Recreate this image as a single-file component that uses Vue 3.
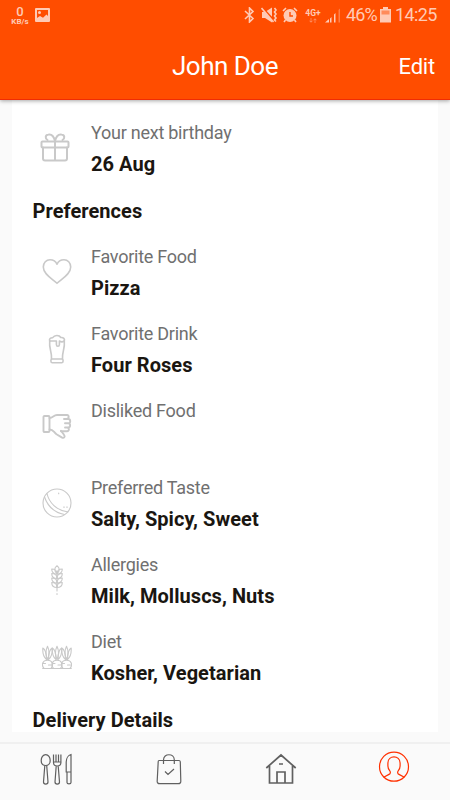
<template>
  <div class="screen">
    <header class="header">
      <div class="status-bar">
        <div class="net-speed">
          <span class="net-value">0</span>
          <span class="net-unit">KB/s</span>
        </div>
        <svg class="picture" width="15" height="14" viewBox="0 0 15 14">
          <path
            fill="currentColor"
            fill-rule="evenodd"
            d="M1 0h13a1 1 0 0 1 1 1v12a1 1 0 0 1-1 1H1a1 1 0 0 1-1-1V1a1 1 0 0 1 1-1zM2 2v8l3-2 3 1.700 3.500-3.200L13 8V2zM4.500 3a1.500 1.500 0 1 1 0 3 1.500 1.500 0 0 1 0-3z"
          />
        </svg>
        <div class="status-right">
          <svg class="bluetooth" width="11" height="16" viewBox="0 0 11 16">
            <path class="line" d="M1 4l8 7.500L5.500 15V1L9 4.500 1 12" />
          </svg>
          <svg class="mute" width="17" height="16" viewBox="0 0 17 16">
            <path fill="currentColor" d="M1 5h3l7-4.500v15L4 11H1z" />
            <path class="slash" d="M1.500 1l12 13" />
            <path class="line" d="M.5 1l12 14M13.500 1l1.500 2-1.500 2 1.500 2-1.500 2 1.500 2-1.500 2 1.500 1.500" />
          </svg>
          <svg class="alarm" width="16" height="16" viewBox="0 0 16 16">
            <circle cx="8" cy="8.500" r="6.500" fill="currentColor" />
            <path class="line" d="M1 4l3-3M15 4l-3-3M3.500 13L2 15M12.500 13l1.500 2" />
            <path class="hands" d="M8 5v4h3" />
          </svg>
          <div class="mobile">
            <span class="mobile-type">4G+</span>
            <svg width="8" height="5" viewBox="0 0 8 5">
              <path class="arrows" d="M2 0v4M.5 2.700L2 4.300l1.500-1.600M6 5V1M4.500 2.300L6 .7l1.500 1.600" />
            </svg>
          </div>
          <svg class="signal" width="16" height="15" viewBox="0 0 16 15">
            <path fill="currentColor" d="M0 14.500L4 11v3.500zM5 10.500L6.500 9v5.500H5zM9 6.500L10.500 5v9.500H9z" />
            <path fill="currentColor" opacity="0.4" d="M13.500 2L15 .5v14h-1.500z" />
          </svg>
          <span class="percent">46%</span>
          <svg class="battery" width="11" height="16" viewBox="0 0 11 16">
            <path fill="currentColor" opacity="0.5" d="M3 0h5v2h2.500v6H.5V2H3z" />
            <path fill="currentColor" d="M3 0h5v2h3v13.500H0V2h3zM1.500 3.500v4h8v-4z" fill-rule="evenodd" />
          </svg>
          <span class="clock">14:25</span>
        </div>
      </div>
      <div class="title-bar">
        <h1 class="title">John Doe</h1>
        <button type="button" class="edit">Edit</button>
      </div>
    </header>

    <main class="content">
      <section v-for="section in sections" :key="section.name" class="section">
        <h2 v-if="section.title" class="section-title">{{ section.title }}</h2>
        <div v-for="row in section.rows" :key="row.label" class="row">
          <svg class="row-icon" :class="row.icon" width="30" height="30" viewBox="0 0 30 30">
            <path v-for="(d, i) in icons[row.icon]" :key="i" :d="d" />
          </svg>
          <div class="row-text">
            <div class="label">{{ row.label }}</div>
            <div class="value">{{ row.value }}</div>
          </div>
        </div>
      </section>
    </main>

    <nav class="tab-bar">
      <button
        v-for="tab in tabs"
        :key="tab.name"
        type="button"
        class="tab"
        :class="[tab.name, { active: activeTab === tab.name }]"
        :aria-label="tab.name"
        @click="activeTab = tab.name"
      >
        <svg width="32" height="32" viewBox="0 0 32 32">
          <path v-for="(d, i) in tab.paths" :key="i" :d="d" />
        </svg>
      </button>
    </nav>
  </div>
</template>

<script setup>
import { ref } from 'vue'

const activeTab = ref('profile')

const sections = [
  {
    name: 'general',
    title: '',
    rows: [{ icon: 'gift', label: 'Your next birthday', value: '26 Aug' }]
  },
  {
    name: 'preferences',
    title: 'Preferences',
    rows: [
      { icon: 'heart', label: 'Favorite Food', value: 'Pizza' },
      { icon: 'beer', label: 'Favorite Drink', value: 'Four Roses' },
      { icon: 'dislike', label: 'Disliked Food', value: '' },
      { icon: 'taste', label: 'Preferred Taste', value: 'Salty, Spicy, Sweet' },
      { icon: 'wheat', label: 'Allergies', value: 'Milk, Molluscs, Nuts' },
      { icon: 'carrots', label: 'Diet', value: 'Kosher, Vegetarian' }
    ]
  },
  {
    name: 'delivery',
    title: 'Delivery Details',
    rows: []
  }
]

const grain = [4, 8.5, 13, 17.5].flatMap((y) => [
  `M15 ${y + 5}c-4 0-5.300-1.800-5.300-5 3.500 0 5.300 1.500 5.300 5z`,
  `M15 ${y + 5}c4 0 5.300-1.800 5.300-5-3.500 0-5.300 1.500-5.300 5z`
])

const carrot = (x) => [
  `M${x - 3.5} 26.300c-3-3.300-1.500-8 3.500-8s6.500 4.700 3.500 8`,
  `M${x} 17.500c-2.200-5-2-9 0-13.200 2 4.200 2.200 8.200 0 13.200z`,
  `M${x - 1} 17.500c-3.200-2.500-4-6-3.700-11.500 2.600 1.500 3.700 5.500 3.700 11.500z`,
  `M${x + 1} 17.500c3.200-2.500 4-6 3.700-11.500-2.600 1.500-3.700 5.500-3.700 11.500z`,
  `M${x - 4.5} 21.500h2.500M${x + 1} 23h3`
]

const icons = {
  gift: [
    'M2.500 9.500h25a1 1 0 0 1 1 1v4a1 1 0 0 1-1 1h-25a1 1 0 0 1-1-1v-4a1 1 0 0 1 1-1z',
    'M3 15.500v11a2 2 0 0 0 2 2h20a2 2 0 0 0 2-2v-11M15 9.500v19',
    'M15 9c-1-4-3.500-7-6.500-6.500C5 3 5 6.500 7.500 8M15 9c1-4 3.500-7 6.500-6.500C25 3 25 6.500 22.500 8'
  ],
  heart: [
    'M15 26.300C11 22.200 1.300 17.500 1.300 10c0-4.300 3-7.300 6.700-7.300 3.200 0 5.800 1.600 7 4.500 1.200-2.900 3.800-4.500 7-4.500 3.700 0 6.700 3 6.700 7.300 0 7.500-9.700 12.200-13.700 16.300z'
  ],
  beer: [
    'M7.700 7c-.8-2 .8-3.500 3-3.300C12.500.8 17.300.8 18.800 3.500c2.700-.3 4.200 1.500 3.500 3.500',
    'M7.700 7h6.700v3.500c0 2.300 3 2.300 3 0V7c2 1.300 3.500 1 4.900 0',
    'M7.700 7c-.9 8 2.500 11 1.800 18M22.300 7c.9 8-2.500 11-1.800 18',
    'M10 25h10c1.500 0 1.500 3.700 0 3.700H10c-1.500 0-1.500-3.700 0-3.700z'
  ],
  dislike: [
    'M2.500 5h4a1 1 0 0 1 1 1v14a1 1 0 0 1-1 1h-4a1 1 0 0 1-1-1V6a1 1 0 0 1 1-1z',
    'M7.500 7c3.500 0 4-3 7.500-3h10c2.300 0 2.300 4-.5 4h-2.500M24.500 8H26c3 0 3 4.300 0 4.300h-3M26 12.300c3 0 2.700 4.200 0 4.200h-3M25 16.500c2.500 0 2.500 3.700 0 3.700h-6',
    'M7.500 18.500c4 0 4 2.500 7 4.700l5.200 3.200c2.400 1.300 3.800-.8 2.300-2.600l-3-4.100'
  ],
  taste: [
    'M15 1a14 14 0 1 0 0 28 14 14 0 1 0 0-28z',
    'M5 5.500c2 9 9.500 17 21 18.500M2.500 9c3 8.500 9 15.500 20 17.500M16.700 5v.7M22 18.700v.7M25 18.700v.7'
  ],
  wheat: [
    'M15 .8c-3 2.200-3 5 0 7.700 3-2.700 3-5.500 0-7.700z',
    ...grain,
    'M15 8v18M15 28.500v1'
  ],
  carrots: [...carrot(5.5), ...carrot(15), ...carrot(24.5), 'M.7 26.500h28.600']
}

const tabs = [
  {
    name: 'food',
    paths: [
      'M5.700 1.700C3 1.700 1.200 4.500 1.200 7.500s1.800 5 4.500 5 4.500-2 4.500-5-1.800-5.800-4.500-5.800z',
      'M4.800 12.500L3.500 29c0 2.800 4.500 2.800 4.500 0L6.700 12.500',
      'M13.500 1.500v8c0 2.500 1.800 3.500 3.700 3.500s3.700-1 3.700-3.500v-8M16 1.500v7M18.500 1.500v7M13.500 9h7.400M16.200 13L15 29c0 2.800 4.500 2.800 4.500 0l-1.300-16',
      'M31 1.500v28c0 1.700-4 1.700-4 0V19h-.8V9c0-3.500 2-6.800 4.800-7.500zM26.500 19H31'
    ]
  },
  {
    name: 'orders',
    paths: [
      'M6 7.500h20c1 0 1.200.5 1.300 1.300L27.800 28c.1 1.800-.8 2.700-2.500 2.700H6.700C5 30.700 4 29.800 4.200 28L5.200 8.800c0-.8.2-1.300.8-1.300z',
      'M10.500 11V7c0-7 10.800-7 10.800 0v4M12 18.500l3 3 6-5.500'
    ]
  },
  {
    name: 'home',
    paths: ['M1.300 15L16 2l14.700 13M4.500 13v17h23V13M12 30V19h8v11M14 11h4']
  },
  {
    name: 'profile',
    paths: [
      'M16 1.200a14.500 14.500 0 1 0 0 29 14.500 14.500 0 1 0 0-29z',
      'M5.700 26.200l5.300-2.800c1.500-.8 1.700-2.300.8-3.500-1.300-1.500-1.900-2.800-1.900-4.800V12c0-8.200 12.200-8.200 12.200 0v3.100c0 2-.6 3.300-1.900 4.800-.9 1.200-.7 2.700.8 3.500l5.300 2.800'
    ]
  }
]
</script>

<style>
body {
  margin: 0;
  background: #fafafa;
}
</style>

<style scoped>
.screen {
  display: flex;
  flex-direction: column;
  width: 450px;
  height: 800px;
  overflow: hidden;
  background: #fafafa;
  font-family: Roboto, 'Liberation Sans', sans-serif;
}

.header {
  flex: none;
  box-sizing: border-box;
  height: 100px;
  background: #ff4d00;
  border-bottom: 1px solid #f02c05;
  box-shadow: 0 1px 4px rgba(0, 0, 0, 0.35);
  z-index: 1;
}

.status-bar {
  display: flex;
  align-items: center;
  height: 30px;
  padding: 0 13px 0 11px;
  color: #ffcab5;
}

.net-speed {
  display: flex;
  flex-direction: column;
  align-items: center;
  width: 18px;
  margin-right: 6px;
}

.net-value {
  font-size: 13px;
  font-weight: 500;
  line-height: 12px;
}

.net-unit {
  font-size: 8px;
  font-weight: 700;
  line-height: 7px;
}

.status-right {
  display: flex;
  align-items: center;
  margin-left: auto;
}

.line,
.slash,
.hands,
.arrows {
  fill: none;
  stroke: currentColor;
  stroke-width: 1.6;
}

.slash {
  stroke: #ff4d00;
  stroke-width: 2;
}

.hands {
  stroke: #ff4d00;
  stroke-width: 1.4;
}

.arrows {
  stroke-width: 0.9;
  opacity: 0.5;
}

.mute {
  margin-left: 6px;
}

.alarm {
  margin-left: 4px;
}

.mobile {
  display: flex;
  flex-direction: column;
  align-items: center;
  width: 16px;
  margin-left: 7px;
}

.mobile-type {
  font-size: 8.5px;
  font-weight: 700;
  line-height: 10px;
}

.signal {
  margin-left: 4px;
}

.percent {
  width: 31px;
  margin-left: 5px;
}

.battery {
  margin-left: 3px;
}

.clock {
  width: 42px;
  margin-left: 4px;
}

.percent,
.clock {
  font-size: 18px;
  line-height: 24px;
  letter-spacing: -0.9px;
  white-space: nowrap;
}

.clock {
  letter-spacing: -0.6px;
}

.title-bar {
  display: grid;
  grid-template-columns: 1fr auto 1fr;
  align-items: center;
  height: 72px;
  padding: 0 15px;
  color: #fff;
}

.title {
  grid-column: 2;
  margin: 0;
  font-size: 26px;
  font-weight: 400;
  letter-spacing: -0.5px;
}

.edit {
  justify-self: end;
  padding: 0;
  border: none;
  background: none;
  color: inherit;
  font: inherit;
  font-size: 22px;
  letter-spacing: -0.2px;
}

.content {
  flex: none;
  box-sizing: border-box;
  height: 632px;
  margin: 0 12px;
  padding: 20px 21px 0;
  overflow: hidden;
  background: #fff;
}

.section-title {
  height: 47px;
  margin: 0 0 0 -0.5px;
  color: #1a1611;
  font-size: 20px;
  font-weight: 700;
  line-height: 28px;
  letter-spacing: 0.05px;
}

.row {
  display: flex;
  height: 77px;
  padding-left: 9px;
}

.row-icon {
  flex: none;
  margin-top: 13px;
  fill: none;
  stroke: #c9c9c9;
  stroke-width: 1.6;
  stroke-linecap: round;
  stroke-linejoin: round;
}

.row-icon.gift {
  margin-top: 12px;
  margin-left: -2.5px;
  margin-right: 2.5px;
  stroke-width: 2;
}

.row-icon.dislike {
  stroke-width: 1.9;
}

.row-icon.taste,
.row-icon.wheat,
.row-icon.carrots {
  stroke-width: 1.1;
}

.row-text {
  margin-left: 19px;
}

.label {
  color: #707070;
  font-size: 18px;
  line-height: 25px;
  letter-spacing: -0.25px;
}

.value {
  color: #1a1611;
  font-size: 20px;
  font-weight: 700;
  line-height: 38px;
  letter-spacing: 0.05px;
}

.tab-bar {
  display: grid;
  grid-template-columns: repeat(4, 1fr);
  flex: none;
  box-sizing: border-box;
  height: 58px;
  margin-top: 10px;
  border-top: 2px solid #f0f0f0;
}

.tab {
  display: flex;
  justify-content: center;
  padding: 9px 0 0;
  border: none;
  background: none;
  color: #606060;
}

.tab svg {
  fill: none;
  stroke: currentColor;
  stroke-width: 1.2;
}

.tab.home svg {
  stroke-width: 1.7;
}

.tab.active {
  padding-top: 7px;
  color: #ff3000;
}
</style>
